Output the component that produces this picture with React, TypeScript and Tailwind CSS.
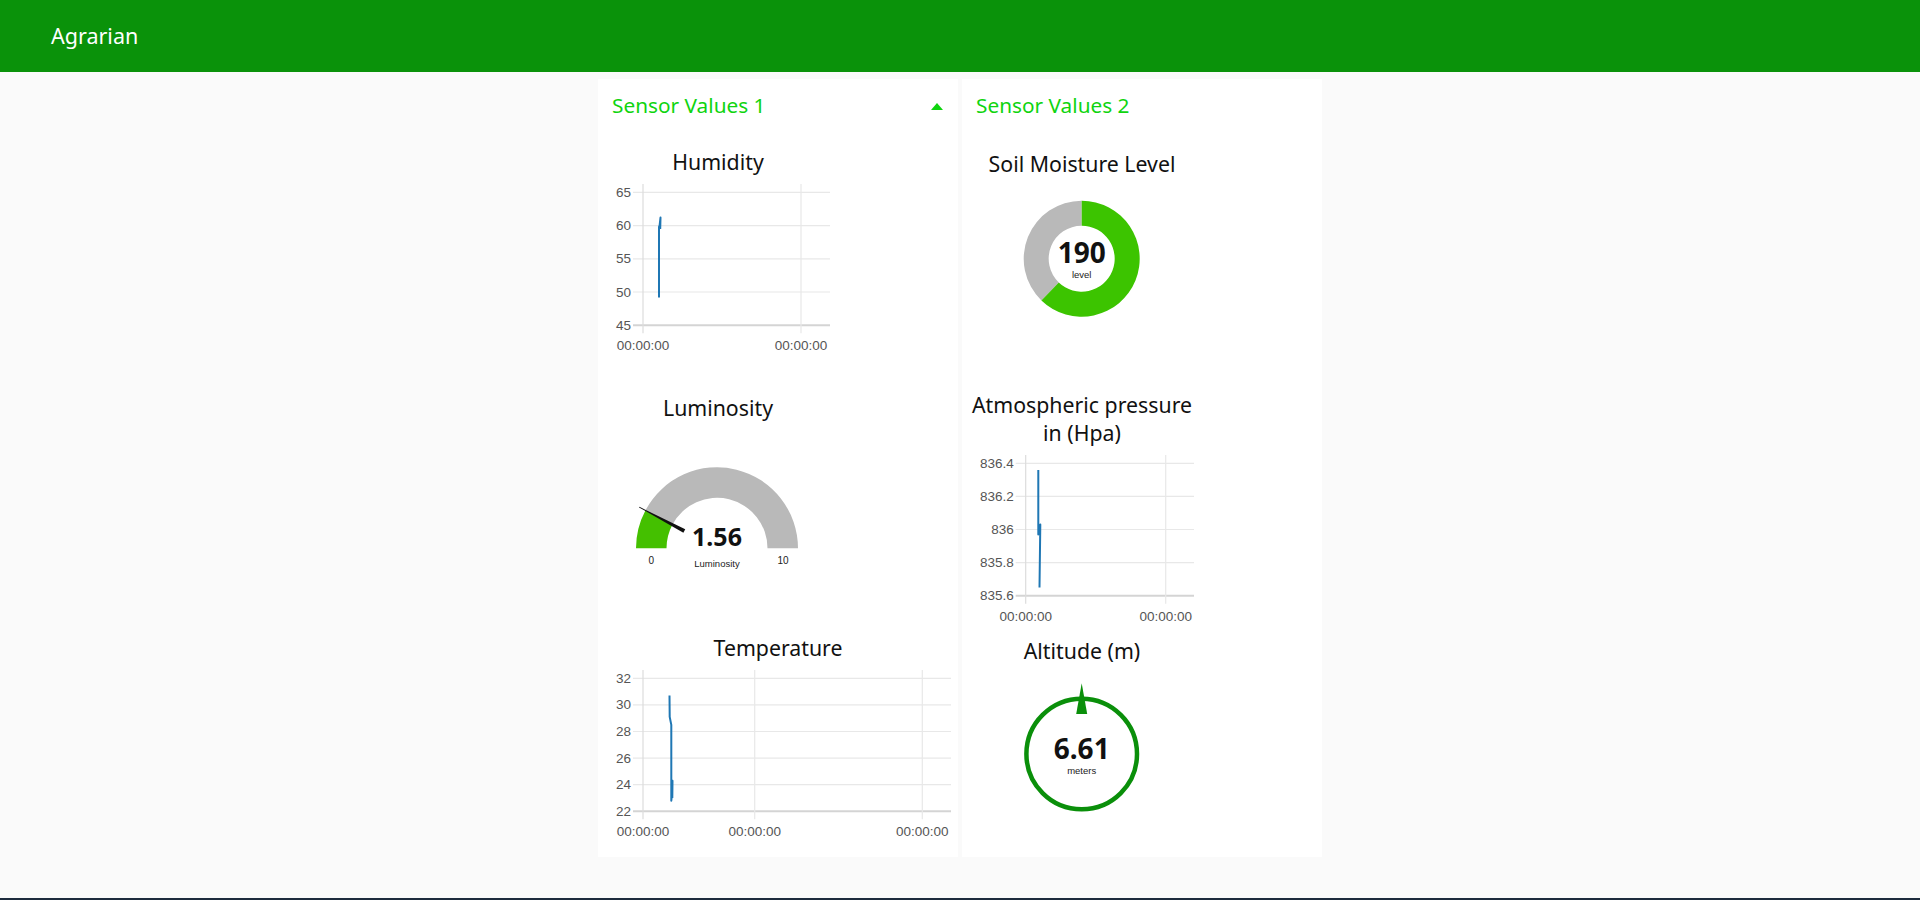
import React from 'react';

type Tick = { label: string; y: number };

const AXIS_FONT = '"Liberation Sans", Arial, sans-serif';
const TITLE_FONT = '"Noto Sans", "Open Sans", sans-serif';

type ChartProps = {
  width: number;
  axisX: number;
  rightX: number;
  ticks: Tick[];
  xs: number[];
  points: string;
};

// small chart.js-like line chart, coordinates are inside the widget
const LineChart = ({ width, axisX, rightX, ticks, xs, points }: ChartProps) => {
  const bottom = ticks[ticks.length - 1].y;
  return (
    <svg width={width} height={179} className="block">
      {ticks.map((t, i) => (
        <g key={t.label}>
          <line
            x1={axisX - 10}
            x2={rightX}
            y1={t.y}
            y2={t.y}
            stroke={i === ticks.length - 1 ? '#d4d4d4' : '#e8e8e8'}
            strokeWidth={i === ticks.length - 1 ? 2 : 1.2}
          />
          <text
            x={axisX - 12}
            y={t.y + 4.5}
            textAnchor="end"
            fontFamily={AXIS_FONT}
            fontSize={13.5}
            fill="#555"
          >
            {t.label}
          </text>
        </g>
      ))}
      {xs.map((x, i) => (
        <g key={x}>
          <line
            x1={x}
            x2={x}
            y1={8}
            y2={bottom + 8}
            stroke={i === 0 ? '#dcdcdc' : '#e8e8e8'}
            strokeWidth={1.2}
          />
          <text x={x} y={173.5} textAnchor="middle" fontFamily={AXIS_FONT} fontSize={13.5} fill="#555">
            00:00:00
          </text>
        </g>
      ))}
      <polyline points={points} fill="none" stroke="#1f77b4" strokeWidth={2} strokeLinejoin="round" />
    </svg>
  );
};

const WidgetTitle = ({ children }: { children: React.ReactNode }) => (
  <div className="text-center text-[21.3px] leading-[28px] text-[#111]">{children}</div>
);

const GroupHeader = ({ title, caret }: { title: string; caret?: boolean }) => (
  <div className="flex h-[54px] items-center justify-between pl-[14px] pr-[15px]">
    <span className="text-[20.8px] text-[#0fd40f]">{title}</span>
    {caret && (
      <svg width="12" height="7" viewBox="0 0 12 7">
        <path d="M0 7 L6 0 L12 7 Z" fill="#0fd40f" />
      </svg>
    )}
  </div>
);

const LuminosityGauge = () => (
  <svg width={228} height={158} className="block">
    <path d="M 41.41 88.4 A 81 81 0 0 1 194 126.3 L 163.5 126.3 A 50.5 50.5 0 0 0 68.37 102.67 Z" fill="#b9b9b9" />
    <path d="M 32 126.3 A 81 81 0 0 1 41.41 88.4 L 68.37 102.67 A 50.5 50.5 0 0 0 62.5 126.3 Z" fill="#44c000" />
    <polygon points="35.37,84.85 35.09,85.39 79.36,110.76 81.24,107.22" fill="#111" />
    <text x={113} y={124} textAnchor="middle" fontFamily={TITLE_FONT} fontWeight={700} fontSize={25} fill="#111">
      1.56
    </text>
    <text x={113} y={145} textAnchor="middle" fontFamily={AXIS_FONT} fontSize={9.5} fill="#222">
      Luminosity
    </text>
    <text x={47.3} y={142} textAnchor="middle" fontFamily={AXIS_FONT} fontSize={10} fill="#222">
      0
    </text>
    <text x={179} y={142} textAnchor="middle" fontFamily={AXIS_FONT} fontSize={10} fill="#222">
      10
    </text>
  </svg>
);

const SoilDonut = () => (
  <svg width={228} height={213} className="block">
    <path d="M 73.41 122.42 A 58 58 0 0 1 113.7 22.7 L 113.7 47.7 A 33 33 0 0 0 90.77 104.44 Z" fill="#b9b9b9" />
    <path d="M 113.7 22.7 A 58 58 0 1 1 73.41 122.42 L 90.77 104.44 A 33 33 0 1 0 113.7 47.7 Z" fill="#3cc400" />
    <text x={113.7} y={85} textAnchor="middle" fontFamily={TITLE_FONT} fontWeight={700} fontSize={28} fill="#111">
      190
    </text>
    <text x={113.7} y={100} textAnchor="middle" fontFamily={AXIS_FONT} fontSize={9.5} fill="#222">
      level
    </text>
  </svg>
);

const AltitudeCompass = () => (
  <svg width={228} height={180} className="block">
    <circle cx={113.7} cy={89} r={55.3} fill="none" stroke="#0a8f0a" strokeWidth={4.5} />
    <polygon points="113.7,18.3 108.2,49 119.2,49" fill="#0a8f0a" />
    <text x={113.7} y={94} textAnchor="middle" fontFamily={TITLE_FONT} fontWeight={700} fontSize={28} fill="#111">
      6.61
    </text>
    <text x={113.7} y={108.5} textAnchor="middle" fontFamily={AXIS_FONT} fontSize={9.5} fill="#222">
      meters
    </text>
  </svg>
);

const App = () => {
  return (
    <div className="flex h-[900px] flex-col overflow-hidden border-b-2 border-[#1d2b3d] bg-[#fafafa] font-['Noto_Sans','Open_Sans',sans-serif]">
      <header className="flex h-[72px] shrink-0 items-center bg-[#0a920a] pl-[51px] text-[21.5px] text-white">
        Agrarian
      </header>

      <main className="flex justify-center gap-[4px] pt-[7px]">
        {/* group 1 */}
        <section className="h-[778px] w-[360px] bg-white">
          <GroupHeader title="Sensor Values 1" caret />
          <div className="ml-[6px] mt-[15px] w-[228px]">
            <WidgetTitle>Humidity</WidgetTitle>
            <LineChart
              width={228}
              axisX={39}
              rightX={226}
              xs={[39, 197]}
              ticks={[
                { label: '65', y: 16.3 },
                { label: '60', y: 49.6 },
                { label: '55', y: 82.8 },
                { label: '50', y: 116 },
                { label: '45', y: 149.3 },
              ]}
              points="55,121.4 55,50.9 55.6,49.5 56.5,41.6 56.2,52.9"
            />
          </div>
          <div className="ml-[6px] mt-[39px] w-[228px]">
            <WidgetTitle>Luminosity</WidgetTitle>
            <LuminosityGauge />
          </div>
          <div className="ml-[6px] mt-[54px] w-[348px]">
            <WidgetTitle>Temperature</WidgetTitle>
            <LineChart
              width={348}
              axisX={39}
              rightX={347}
              xs={[39, 150.7, 318.3]}
              ticks={[
                { label: '32', y: 16.3 },
                { label: '30', y: 42.9 },
                { label: '28', y: 69.5 },
                { label: '26', y: 96.1 },
                { label: '24', y: 122.7 },
                { label: '22', y: 149.3 },
              ]}
              points="65.5,33.6 65.7,54.9 67.3,62.9 67.3,138.7 68,132 68.5,118.7 68.3,136"
            />
          </div>
        </section>

        {/* group 2 */}
        <section className="h-[778px] w-[360px] bg-white">
          <GroupHeader title="Sensor Values 2" />
          <div className="ml-[6px] mt-[17px] w-[228px]">
            <WidgetTitle>Soil Moisture Level</WidgetTitle>
            <SoilDonut />
          </div>
          <div className="ml-[6px] w-[228px]">
            <WidgetTitle>
              Atmospheric pressure
              <br />
              in (Hpa)
            </WidgetTitle>
            <LineChart
              width={228}
              axisX={57.7}
              rightX={226}
              xs={[57.7, 197.7]}
              ticks={[
                { label: '836.4', y: 16.3 },
                { label: '836.2', y: 49.4 },
                { label: '836', y: 82.5 },
                { label: '835.8', y: 115.6 },
                { label: '835.6', y: 148.7 },
              ]}
              points="70.3,22.9 70.3,87.5 72.3,77.5 71.5,140.4"
            />
          </div>
          <div className="ml-[6px] mt-[11px] w-[228px]">
            <WidgetTitle>Altitude (m)</WidgetTitle>
            <AltitudeCompass />
          </div>
        </section>
      </main>
    </div>
  );
};

export default App;
